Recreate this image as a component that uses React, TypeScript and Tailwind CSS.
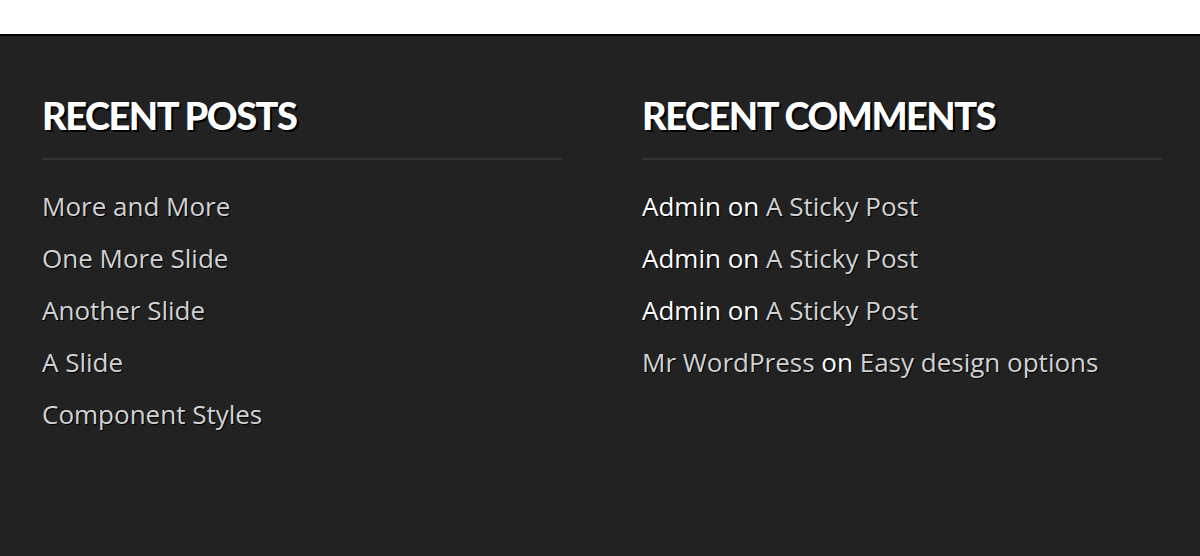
const posts = [
  "More and More",
  "One More Slide",
  "Another Slide",
  "A Slide",
  "Component Styles",
];

const comments = [
  { author: "Admin", post: "A Sticky Post", linked: false },
  { author: "Admin", post: "A Sticky Post", linked: false },
  { author: "Admin", post: "A Sticky Post", linked: false },
  { author: "Mr WordPress", post: "Easy design options", linked: true },
];

function WidgetTitle({ children }: { children: React.ReactNode }) {
  return (
    <div className="border-b-2 border-[#333333] pb-[19px]">
      <h3
        className="text-[38px] leading-[48px] font-black uppercase text-white tracking-[-1.5px] [text-shadow:2px_2px_0_#000]"
        style={{ fontFamily: "Lato, 'Liberation Sans', sans-serif" }}
      >
        {children}
      </h3>
    </div>
  );
}

export default function App() {
  return (
    <div className="w-[1200px] h-[556px] bg-white">
      <div className="h-[34px] bg-white" />
      <footer
        className="h-[522px] bg-[#222222] border-t-2 border-black px-[42px] pt-[55px] grid grid-cols-[520px_520px] gap-[80px] content-start"
        style={{ fontFamily: "'Open Sans', 'Liberation Sans', sans-serif" }}
      >
        {/* Recent posts */}
        <section>
          <WidgetTitle>Recent Posts</WidgetTitle>
          <ul className="mt-[20px]">
            {posts.map((p) => (
              <li
                key={p}
                className="text-[26px] leading-[52px] text-[#d2d2d4] [text-shadow:1px_1px_0_#000]"
              >
                <a href="#">{p}</a>
              </li>
            ))}
          </ul>
        </section>

        {/* Recent comments */}
        <section>
          <WidgetTitle>Recent Comments</WidgetTitle>
          <ul className="mt-[20px]">
            {comments.map((c, i) => (
              <li
                key={i}
                className="text-[26px] leading-[52px] text-white [text-shadow:1px_1px_0_#000]"
              >
                {c.linked ? (
                  <a href="#" className="text-[#d2d2d4]">
                    {c.author}
                  </a>
                ) : (
                  <span>{c.author}</span>
                )}{" "}
                on{" "}
                <a href="#" className="text-[#d2d2d4]">
                  {c.post}
                </a>
              </li>
            ))}
          </ul>
        </section>
      </footer>
    </div>
  );
}
